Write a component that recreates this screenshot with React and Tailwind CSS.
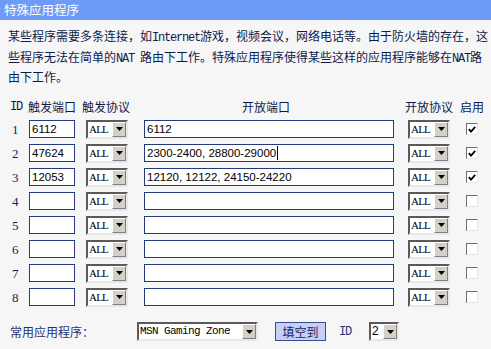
import React from "react";

const rows = [
  { id: 1, trig: "6112", open: "6112", on: true },
  { id: 2, trig: "47624", open: "2300-2400, 28800-29000", on: true, caret: true },
  { id: 3, trig: "12053", open: "12120, 12122, 24150-24220", on: true },
  { id: 4, trig: "", open: "", on: false },
  { id: 5, trig: "", open: "", on: false },
  { id: 6, trig: "", open: "", on: false },
  { id: 7, trig: "", open: "", on: false },
  { id: 8, trig: "", open: "", on: false },
];

const cjk = "font-['Noto_Sans_CJK_SC',sans-serif]";
const lat = "font-['Liberation_Mono','Noto_Sans_CJK_SC',monospace] text-[12px] tracking-[-1.2px]";
const allText = "font-['Liberation_Serif',serif] text-[11px] tracking-[-0.8px]";

function Arrow() {
  return (
    <span className="flex h-full w-[14px] shrink-0 items-center justify-center border border-t-white border-l-white border-b-[#808080] border-r-[#808080] bg-[#d4d0c8]">
      <svg width="7" height="4" viewBox="0 0 7 4">
        <polygon points="0,0 7,0 3.5,4" fill="#000" />
      </svg>
    </span>
  );
}

function Select({ value, className, textClass }) {
  return (
    <div
      className={`flex h-[19px] items-center border-2 border-t-[#5a5a5a] border-l-[#5a5a5a] border-b-[#e8e8e8] border-r-[#e8e8e8] bg-white ${className}`}
    >
      <span className={`min-w-0 flex-1 whitespace-nowrap pl-px leading-[15px] text-black ${textClass}`}>
        {value}
      </span>
      <Arrow />
    </div>
  );
}

function Input({ value, className, caret }) {
  return (
    <div
      className={`flex h-[18px] items-center border border-[#243a7c] bg-white pl-[2px] font-['Liberation_Sans',sans-serif] text-[11.5px] leading-[16px] text-black ${className}`}
    >
      <span className="whitespace-nowrap">{value}</span>
      {caret && <span className="ml-px h-[14px] w-px bg-black" />}
    </div>
  );
}

function Check({ on }) {
  return (
    <div className="flex h-[12px] w-[12px] items-center justify-center border border-t-[#6e6e6e] border-l-[#6e6e6e] border-b-[#e6e6e6] border-r-[#e6e6e6] bg-white">
      {on && (
        <svg width="8" height="7" viewBox="0 0 8 7">
          <polyline points="0.8,3.2 3,5.6 7.2,0.8" fill="none" stroke="#000" strokeWidth="1.8" />
        </svg>
      )}
    </div>
  );
}

export default function App() {
  return (
    <div className={`h-[349px] w-[491px] overflow-hidden bg-[#f6f6f6] text-[12px] text-[#13245e] ${cjk}`}>
      <div className="h-[20px] bg-[#6d9cf8] pl-[4px] text-[12.5px] leading-[20px] text-white">特殊应用程序</div>

      <div className="pl-[8px] pt-[7px] leading-[18.5px] text-[#0e1a4a]">
        <div className="whitespace-nowrap">
          某些程序需要多条连接，如<span className={lat}>Internet</span>游戏，视频会议，网络电话等。由于防火墙的存在，这
        </div>
        <div className="whitespace-nowrap">
          些程序无法在简单的<span className={lat}>NAT </span>路由下工作。特殊应用程序使得某些这样的应用程序能够在<span className={lat}>NAT</span>路
        </div>
        <div className="whitespace-nowrap">由下工作。</div>
      </div>

      <div className="mt-[10px] grid h-[20px] grid-cols-[28px_54px_160px_163px_55px_1fr] items-center text-[#0e1a4a]">
        <span className={`pl-[10px] ${lat}`}>ID</span>
        <span>触发端口</span>
        <span>触发协议</span>
        <span>开放端口</span>
        <span>开放协议</span>
        <span>启用</span>
      </div>

      <div className="mt-[3px] flex flex-col gap-[6px]">
        {rows.map((r) => (
          <div
            key={r.id}
            className="grid h-[18px] grid-cols-[29px_57px_58px_264px_58px_1fr] items-center"
          >
            <span className="pl-[12px] font-['Liberation_Serif',serif] text-[13px] text-[#13245e]">{r.id}</span>
            <Input value={r.trig} className="w-[46px]" />
            <Select value="ALL" className="w-[42px]" textClass={allText} />
            <Input value={r.open} className="w-[250px]" caret={r.caret} />
            <Select value="ALL" className="w-[42px]" textClass={allText} />
            <Check on={r.on} />
          </div>
        ))}
      </div>

      <div className="mt-[16px] flex h-[20px] items-center">
        <span className="w-[137px] pl-[10px] text-[12px] text-[#1c3472]">常用应用程序：</span>
        <Select
          value="MSN Gaming Zone"
          className="w-[121px]"
          textClass="font-['Liberation_Mono',monospace] text-[11px] tracking-[-0.6px]"
        />
        <button className="ml-[17px] h-[19px] w-[51px] border border-[#3b4d8f] bg-[#c6cff6] text-[12px] leading-[17px] text-[#13245e]">
          填空到
        </button>
        <span className={`ml-[13px] w-[30px] text-[#1c3472] ${lat}`}>ID</span>
        <Select value="2" className="w-[30px]" textClass="font-['Liberation_Sans',sans-serif] text-[12px]" />
      </div>
    </div>
  );
}
